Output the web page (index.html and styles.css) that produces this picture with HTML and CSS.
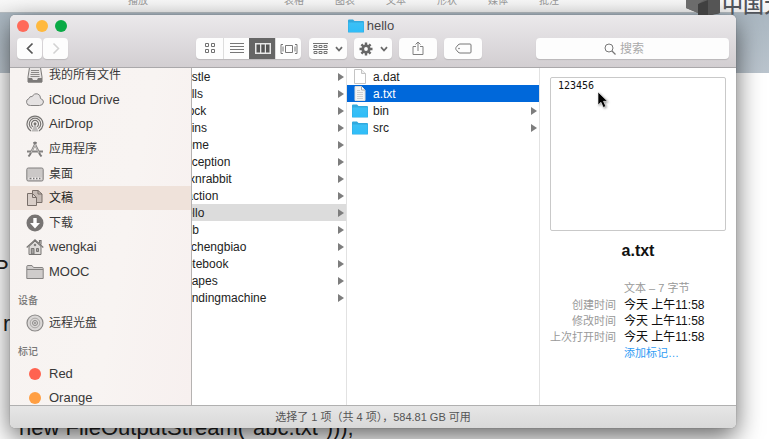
FILE: index.html
```html
<!DOCTYPE html>
<html lang="zh-CN">
<head>
<meta charset="utf-8">
<title>hello</title>
<link rel="stylesheet" href="styles.css">
</head>
<body>
<svg class="defs" aria-hidden="true">
  <defs>
    <linearGradient id="blue" x1="0" y1="0" x2="0" y2="1"><stop offset="0" stop-color="#3cc0f5"/><stop offset="1" stop-color="#2fbdf8"/></linearGradient>
    <symbol id="folder" viewBox="0 0 16 14"><path d="M0 1.5Q0 .5 1 .5H5L6.5 2H15Q16 2 16 3V13Q16 13.5 15 13.5H1Q0 13.5 0 13Z" fill="#31a9de"/><path d="M.5 3.5H15.5V13H.5Z" fill="url(#blue)"/></symbol>
    <symbol id="page" viewBox="0 0 12 15"><path d="M.5 .5H7.5L11.5 4.5V14.5H.5Z" fill="#fff" stroke="#c4c4c4"/><path d="M7.5 .5V4.5H11.5" fill="#eee" stroke="#c4c4c4"/></symbol>
    <symbol id="textpage" viewBox="0 0 12 15"><path d="M1 .5H7.5L11 4V14.5H1Z" fill="#f4f4f4" stroke="#ddd"/><path d="M7.5 .5V4H11" fill="#fff" stroke="#aaa"/><path d="M3 4.5H6M3 6.5H9M3 8.5H9M3 10.5H9M3 12.5H9" stroke="#cfcfcf"/></symbol>
    <symbol id="chev" viewBox="0 0 8 6"><path d="M1 1.2 4 4.5 7 1.2" fill="none" stroke="#6b6b6b" stroke-width="1.8"/></symbol>
  </defs>
</svg>

<header class="app-bar">
  <span>播放</span><span>表格</span><span>图表</span><span>文本</span><span>形状</span><span>媒体</span><span>批注</span><span>共享</span>
</header>
<div class="backdrop"></div>
<p class="slide-text slide-p">P</p>
<p class="slide-text slide-r">r</p>
<p class="slide-text slide-code">new FileOutputStream("abc.txt")));</p>

<main class="window">
  <header class="titlebar">
    <div class="lights">
      <button class="light close" aria-label="关闭"></button>
      <button class="light mini" aria-label="最小化"></button>
      <button class="light full" aria-label="全屏"></button>
    </div>
    <h1 class="title"><svg width="16" height="14"><use href="#folder"/></svg>hello</h1>
    <div class="toolbar">
      <div class="nav">
        <button class="btn" aria-label="后退"><svg width="10" height="13" viewBox="0 0 10 13"><path d="M7.5 1.5 2.5 6.5 7.5 11.5" fill="none" stroke="#555" stroke-width="1.7"/></svg></button>
        <button class="btn" aria-label="前进"><svg width="10" height="13" viewBox="0 0 10 13"><path d="M2.5 1.5 7.5 6.5 2.5 11.5" fill="none" stroke="#d2d2d2" stroke-width="1.5"/></svg></button>
      </div>
      <div class="views">
        <button aria-label="图标"><svg width="12" height="11" viewBox="0 0 12 11" fill="none" stroke="#707070"><path d="M1.5 .5h3v3h-3zM7.5 .5h3v3h-3zM1.5 6.5h3v3h-3zM7.5 6.5h3v3h-3z"/></svg></button>
        <button aria-label="列表"><svg width="14" height="11" viewBox="0 0 14 11"><path d="M0 .5H14M0 3.5H14M0 6.5H14M0 9.5H14" stroke="#777"/></svg></button>
        <button class="on" aria-label="分栏"><svg width="16" height="11" viewBox="0 0 16 11"><path d="M0 0H16V11H0Z" fill="#e8e8e8"/><path d="M1.5 1.5H5V9.5H1.5ZM6.3 1.5H9.8V9.5H6.3ZM11 1.5H14.5V9.5H11Z" fill="#555"/></svg></button>
        <button aria-label="封面流"><svg width="18" height="10" viewBox="0 0 18 10" fill="none" stroke="#777"><path d="M5.5 1.5H12.5V8.5H5.5ZM3 .5H1V9.5H3M15 .5H17V9.5H15M3 2.500V7.500M15 2.500V7.500"/></svg></button>
      </div>
      <button class="btn wide" aria-label="排列"><svg width="15" height="12" viewBox="0 0 15 12" fill="none" stroke="#737373"><path d="M0 .5H15M0 6.5H15"/><path d="M1 2.5h3v2h-3zM6 2.5h3v2h-3zM11 2.5h3v2h-3zM1 8.5h3v2h-3zM6 8.5h3v2h-3zM11 8.5h3v2h-3z"/></svg><svg width="8" height="6"><use href="#chev"/></svg></button>
      <button class="btn wide" aria-label="操作"><svg width="14" height="14" viewBox="0 0 14 14"><g stroke="#686868" stroke-width="2.4"><path d="M7 .5V13.5M.5 7H13.5M2.4 2.4 11.6 11.6M11.6 2.4 2.4 11.6"/></g><circle cx="7" cy="7" r="4.6" fill="#686868"/><circle cx="7" cy="7" r="1.9" fill="#fff"/></svg><svg width="8" height="6"><use href="#chev"/></svg></button>
      <button class="btn wide" aria-label="共享"><svg width="12" height="15" viewBox="0 0 12 15" fill="none" stroke="#808080"><path d="M4 5.5H1V13.5H11V5.5H8M6 10V1M3.5 3.5 6 1 8.5 3.5"/></svg></button>
      <button class="btn wide" aria-label="标记"><svg width="17" height="11" viewBox="0 0 17 11" fill="none" stroke="#777"><path d="M5 1H15Q16 1 16 2V9Q16 10 15 10H5Q4 10 3 9L1 6.5Q.5 5.5 1 4.5L3 2Q4 1 5 1Z"/><circle cx="4" cy="5.5" r=".8" fill="#777" stroke="none"/></svg></button>
      <label class="search"><svg width="12" height="12" viewBox="0 0 12 12" fill="none" stroke="#777"><circle cx="5" cy="5" r="4"/><path d="M8 8 11.5 11.5" stroke-width="1.3"/></svg><input type="search" placeholder="搜索" aria-label="搜索"></label>
    </div>
  </header>

  <div class="content">
    <nav class="sidebar">
      <ul class="favorites">
        <li><a class="zh" href="#"><svg width="18" height="18" viewBox="0 0 18 18"><path d="M3.5 1.5H14.5L16 11V16H2V11Z" fill="#e7e4e3" stroke="#7c7a79"/><path d="M5 4.5H13M5 6.5H13M4.5 8.5H13.5M4.5 10.5H13.5" stroke="#8b8988"/><path d="M2 12H6L7 14H11L12 12H16V16.5H2Z" fill="#7c7a79"/></svg>我的所有文件</a></li>
        <li><a href="#"><svg width="18" height="18" viewBox="0 0 18 18"><path d="M4.5 14.5A3.6 3.6 0 0 1 3 7.5Q3.5 5 6.3 5.5 8 2 11.8 3 14.7 4 14.5 7.5 17.5 8.5 17.5 11 17 14.5 13.5 14.5Z" fill="#e5e2e2" stroke="#858382"/></svg>iCloud Drive</a></li>
        <li><a href="#"><svg width="18" height="18" viewBox="0 0 18 18" fill="none" stroke="#777573"><path d="M5 16A8 8 0 1 1 13 16M5.8 13.6A5.7 5.7 0 1 1 12.2 13.6M7 11.8A3.5 3.5 0 1 1 11 11.8" stroke-width="1.2"/><path d="M9 8 5.5 16.5H12.5Z" fill="#bbb9b8" stroke="none"/><circle cx="9" cy="8.8" r="1.5" fill="#777573" stroke="none"/></svg>AirDrop</a></li>
        <li><a class="zh" href="#"><svg width="18" height="18" viewBox="0 0 18 18" fill="none"><path d="M10.2 2 4 14.5 2.5 16.5M7.8 2 14 14.5 15.5 16.5" stroke="#7c7a79" stroke-width="2"/><path d="M1 11.5H17" stroke="#858382" stroke-width="2"/><path d="M9.5 4 4.8 13M9 5 13 13" stroke="#e8e5e4" stroke-width=".7"/></svg>应用程序</a></li>
        <li><a class="zh" href="#"><svg width="18" height="18" viewBox="0 0 18 18"><rect x=".8" y="3" width="16.4" height="13" rx="1.5" fill="#cbc8c7" stroke="#817f7e"/><path d="M2.5 12.5H15.5V14.5H2.5Z" fill="#f5f2f1"/><path d="M3.5 13.5H5.5M7 13.5H8.5M10 13.5H11.5M13 13.5H14.5" stroke="#777" stroke-width="1.5"/></svg>桌面</a></li>
        <li class="current"><a class="zh" href="#"><svg width="18" height="18" viewBox="0 0 18 18" stroke="#786e69"><path d="M6.5 1.5H12L16 5V13.5H6.5Z" fill="#c6bbb5"/><path d="M12 1.5V5H16" fill="none"/><path d="M1.5 4.5H6.5L10.5 8.5V16.5H1.5Z" fill="#d9cec8"/><path d="M6.5 4.5V8.5H10.5" fill="none"/></svg>文稿</a></li>
        <li><a class="zh" href="#"><svg width="18" height="18" viewBox="0 0 18 18"><circle cx="9" cy="9" r="8.5" fill="#777473"/><path d="M7.3 4H10.7V9H14L9 14.5 4 9H7.3Z" fill="#fff"/></svg>下载</a></li>
        <li><a href="#"><svg width="18" height="18" viewBox="0 0 18 18" stroke="#777573"><path d="M3 8.5V16.5H15V8.5L9 3Z" fill="#dedbd9"/><path d="M.7 9.5 9 1.8 17.3 9.5M13.5 5V2.5H15V6.5" fill="none" stroke-width="1.2"/><path d="M5.3 16V10.5H8V16ZM10.5 10.5H12.5V13.5H10.5Z" fill="#a5a3a1"/><circle cx="9" cy="7" r=".8" fill="#777"/></svg>wengkai</a></li>
        <li><a href="#"><svg width="18" height="18" viewBox="0 0 18 18" stroke="#858382"><path d="M.8 15.5V3.5Q.8 2.5 1.8 2.5H6L7.5 4.5H16.2Q17.2 4.5 17.2 5.5V15.5Z" fill="#cfcccb"/><path d="M1 6.5H17"/></svg>MOOC</a></li>
      </ul>
      <h2>设备</h2>
      <ul>
        <li><a class="zh" href="#"><svg width="18" height="18" viewBox="0 0 18 18" fill="none" stroke="#8c8a89"><circle cx="9" cy="9" r="8" fill="#dad7d6" stroke-width="1.2"/><circle cx="9" cy="9" r="4.8" stroke="#aaa8a7"/><circle cx="9" cy="9" r="2.5"/><circle cx="9" cy="9" r=".7" fill="#fff"/></svg>远程光盘</a></li>
      </ul>
      <h2>标记</h2>
      <ul>
        <li><a href="#"><svg width="18" height="18" viewBox="0 0 18 18"><circle cx="9" cy="9" r="6" fill="#ff6350"/></svg>Red</a></li>
        <li><a href="#"><svg width="18" height="18" viewBox="0 0 18 18"><circle cx="9" cy="9" r="6" fill="#ff9f43"/></svg>Orange</a></li>
      </ul>
    </nav>

    <ul class="column parents">
      <li class="dir"><a href="#">castle</a></li>
      <li class="dir"><a href="#">cells</a></li>
      <li class="dir"><a href="#">clock</a></li>
      <li class="dir"><a href="#">coins</a></li>
      <li class="dir"><a href="#">home</a></li>
      <li class="dir"><a href="#">exception</a></li>
      <li class="dir"><a href="#">foxnrabbit</a></li>
      <li class="dir"><a href="#">fraction</a></li>
      <li class="dir open"><a href="#">hello</a></li>
      <li class="dir"><a href="#">hub</a></li>
      <li class="dir"><a href="#">jiuchengbiao</a></li>
      <li class="dir"><a href="#">notebook</a></li>
      <li class="dir"><a href="#">shapes</a></li>
      <li class="dir"><a href="#">vendingmachine</a></li>
    </ul>

    <ul class="column files">
      <li><a href="#"><svg width="16" height="15"><use href="#page"/></svg>a.dat</a></li>
      <li class="selected"><a href="#"><svg width="16" height="15"><use href="#textpage"/></svg>a.txt</a></li>
      <li class="dir"><a href="#"><svg width="16" height="14"><use href="#folder"/></svg>bin</a></li>
      <li class="dir"><a href="#"><svg width="16" height="14"><use href="#folder"/></svg>src</a></li>
    </ul>

    <section class="preview">
      <div class="sheet">123456
        <svg class="pointer" width="14" height="20" viewBox="0 0 14 20"><path d="M1 1V14L4 11.3 6.3 16.5 8.8 15.3 6.5 10.3H10.5Z" fill="#000" stroke="#fff" stroke-width=".6"/></svg>
      </div>
      <h2>a.txt</h2>
      <dl>
        <dd class="kind">文本 – 7 字节</dd>
        <dt>创建时间</dt><dd class="time">今天 上午11:58</dd>
        <dt>修改时间</dt><dd class="time">今天 上午11:58</dd>
        <dt>上次打开时间</dt><dd class="time">今天 上午11:58</dd>
        <dd><a href="#">添加标记…</a></dd>
      </dl>
    </section>
  </div>

  <footer class="status">选择了 1 项（共 4 项），584.81 GB 可用</footer>
</main>

<div class="watermark">
  <svg width="34" height="20" viewBox="0 0 34 20"><path d="M0 0H34V13L12 19V13L0 8Z" fill="#606060"/><path d="M12 13 22 9 34 13 22 15 12 19Z" fill="#363636"/><path d="M12 4 22 0V15L12 19Z" fill="#404040"/><path d="M0 0H18L12 4V13L0 8Z" fill="#6c6c6c"/><path d="M22 0H34V13L22 15Z" fill="#555"/></svg>
  <span>中国大</span>
</div>
</body>
</html>
```
FILE: styles.css
```css
* { box-sizing: border-box; }

body {
  margin: 0;
  height: 100vh;
  position: relative;
  overflow: hidden;
  background: #fff;
  color: #2b2b2b;
  font: 12px/16px "Liberation Sans", "Noto Sans CJK SC", sans-serif;
}

ul, dl, dd, h1, h2, p { margin: 0; padding: 0; }
ul { list-style: none; }
a { color: inherit; text-decoration: none; }
button { border: 0; padding: 0; font: inherit; }
svg { flex: none; display: block; }
.defs { position: absolute; width: 0; height: 0; }

/* Document behind the window */
.app-bar {
  display: flex;
  gap: 31px;
  height: 13px;
  padding-left: 128px;
  background: linear-gradient(#f8f8f8, #f0f0f0);
  border-bottom: 1px solid #b5bcc1;
  overflow: hidden;
  color: #999;
  font-size: 10px;
  line-height: 14px;
}
.app-bar span { margin-top: -6px; white-space: nowrap; }
.app-bar span:first-child { margin-right: 105px; }
.app-bar span:last-child { margin-left: 105px; }
.backdrop { height: 60px; background: linear-gradient(#aab7c1, #bac4cd); }
.slide-text {
  position: absolute;
  color: #222;
  font-size: 22px;
  line-height: 24px;
  white-space: nowrap;
}
.slide-p { left: -6px; top: 256px; }
.slide-r { left: 3px; top: 312px; }
.slide-code { left: 19px; bottom: -1px; }

/* Window */
.window {
  position: absolute;
  inset: 15px 33px 11px 10px;
  display: flex;
  flex-direction: column;
  border-radius: 5px;
  overflow: hidden;
  background: #fff;
  box-shadow: 0 0 1px rgba(0, 0, 0, .5), 0 9px 26px rgba(0, 0, 0, .6);
}
.titlebar {
  position: relative;
  z-index: 1;
  flex: none;
  padding: 5px 7px 8px;
  border-bottom: 1px solid #aaa8aa;
  background: linear-gradient(#ebe9eb, #d2ced1);
}
.lights { display: flex; gap: 7px; height: 18px; }
.light { width: 12px; height: 12px; border-radius: 50%; }
.close { background: #ff6a5a; }
.mini { background: #ffb93e; }
.full { background: #0aaa46; }
.title {
  position: absolute;
  top: 3px;
  left: 0;
  right: 4px;
  display: flex;
  justify-content: center;
  gap: 3px;
  color: #4a484a;
  font-size: 13px;
  font-weight: 400;
  line-height: 16px;
}
.title svg { margin-top: 1px; }
.toolbar { display: flex; gap: 7px; }
.nav { display: flex; gap: 1px; margin-right: 121px; }
.btn, .views, .search {
  display: flex;
  align-items: center;
  justify-content: center;
  height: 21px;
  border-radius: 4px;
  background: #fdfdfd;
  box-shadow: 0 1px 1px rgba(0, 0, 0, .13);
}
.nav .btn { width: 25px; }
.wide { width: 38px; gap: 7px; }
.views + .wide { margin-left: 1px; }
.views { overflow: hidden; }
.views button {
  display: flex;
  align-items: center;
  justify-content: center;
  width: 27px;
  height: 21px;
  background: transparent;
}
.views button + button { width: 26px; border-left: 1px solid #ddd; }
.views button.on { background: #666; border-color: #666; }
.search { width: 193px; margin-left: auto; gap: 4px; }
.search input {
  width: 41px;
  padding: 0;
  border: 0;
  outline: 0;
  background: transparent;
  font: inherit;
}
.search input::placeholder { color: #aaa; }

.content { flex: 1; display: flex; min-height: 0; }

/* Sidebar */
.sidebar {
  width: 182px;
  flex: none;
  overflow: hidden;
  border-right: 1px solid #b5b2b1;
  background: linear-gradient(100deg, #f7f3f1, #f8f4f2 60%, #f7f0ef);
  color: #383838;
  font-size: 13px;
}
.sidebar ul { display: flex; flex-direction: column; }
.sidebar .favorites { height: 221px; margin-top: -5px; }
.sidebar li { flex: 1; display: flex; }
.sidebar a {
  flex: 1;
  display: flex;
  align-items: center;
  gap: 5px;
  min-height: 24px;
  padding-left: 16px;
}
.sidebar .zh { font-size: 12px; }
.sidebar .current { background: #efe2da; color: #222; }
.sidebar h2 {
  padding: 9px 8px 2px;
  color: #777;
  font-size: 10px;
  font-weight: 500;
  line-height: 16px;
}

/* Columns */
.column { overflow: hidden; border-right: 1px solid #e2e2e2; color: #222; }
.column a { display: flex; align-items: center; flex: 1; }
.column li { display: flex; align-items: center; height: 17px; }
.dir::after {
  content: "";
  border: 4px solid transparent;
  border-left: 6px solid #7d7d7d;
  border-right: 0;
  margin-right: 2px;
}
.parents { width: 155px; flex: none; }
.parents a { margin-left: -13px; }
.open { background: #dcdcdc; }
.files { width: 193px; flex: none; }
.files a { gap: 5px; padding-left: 5px; }
.selected { background: #0068da; color: #fff; }

/* Preview */
.preview { flex: 1; padding: 9px 10px 0; color: #111; }
.sheet {
  position: relative;
  height: 154px;
  padding: 0 7px;
  border: 1px solid #c9c9c9;
  border-radius: 2px;
  font-family: "DejaVu Sans Mono", monospace;
  font-size: 10px;
}
.pointer { position: absolute; left: 46px; top: 13px; filter: drop-shadow(1px 1px 1px rgba(0, 0, 0, .4)); }
.preview h2 { margin-top: 10px; font-size: 16px; line-height: 20px; text-align: center; }
.preview dl {
  display: grid;
  grid-template-columns: 66px 1fr;
  column-gap: 8px;
  margin-top: 19px;
  font-size: 11px;
  white-space: nowrap;
}
.preview dt { color: #999; text-align: right; }
.preview dd { grid-column: 2; }
.preview .kind { padding-bottom: 1px; color: #999; }
.preview .time { font-size: 12px; }
.preview dd a { color: #2f9cf4; }

.status {
  flex: none;
  padding: 3px 0;
  border-top: 1px solid #b0b0b0;
  background: linear-gradient(#e6e6e6, #d9d9d9);
  color: #555;
  font-size: 11px;
  text-align: center;
}

/* Course logo in the corner */
.watermark {
  position: absolute;
  top: 0;
  left: 686px;
  display: flex;
  gap: 2px;
  color: #50545a;
  font-size: 21px;
  font-weight: 500;
  line-height: 20px;
  white-space: nowrap;
}
.watermark span { margin-top: -5px; }
```
